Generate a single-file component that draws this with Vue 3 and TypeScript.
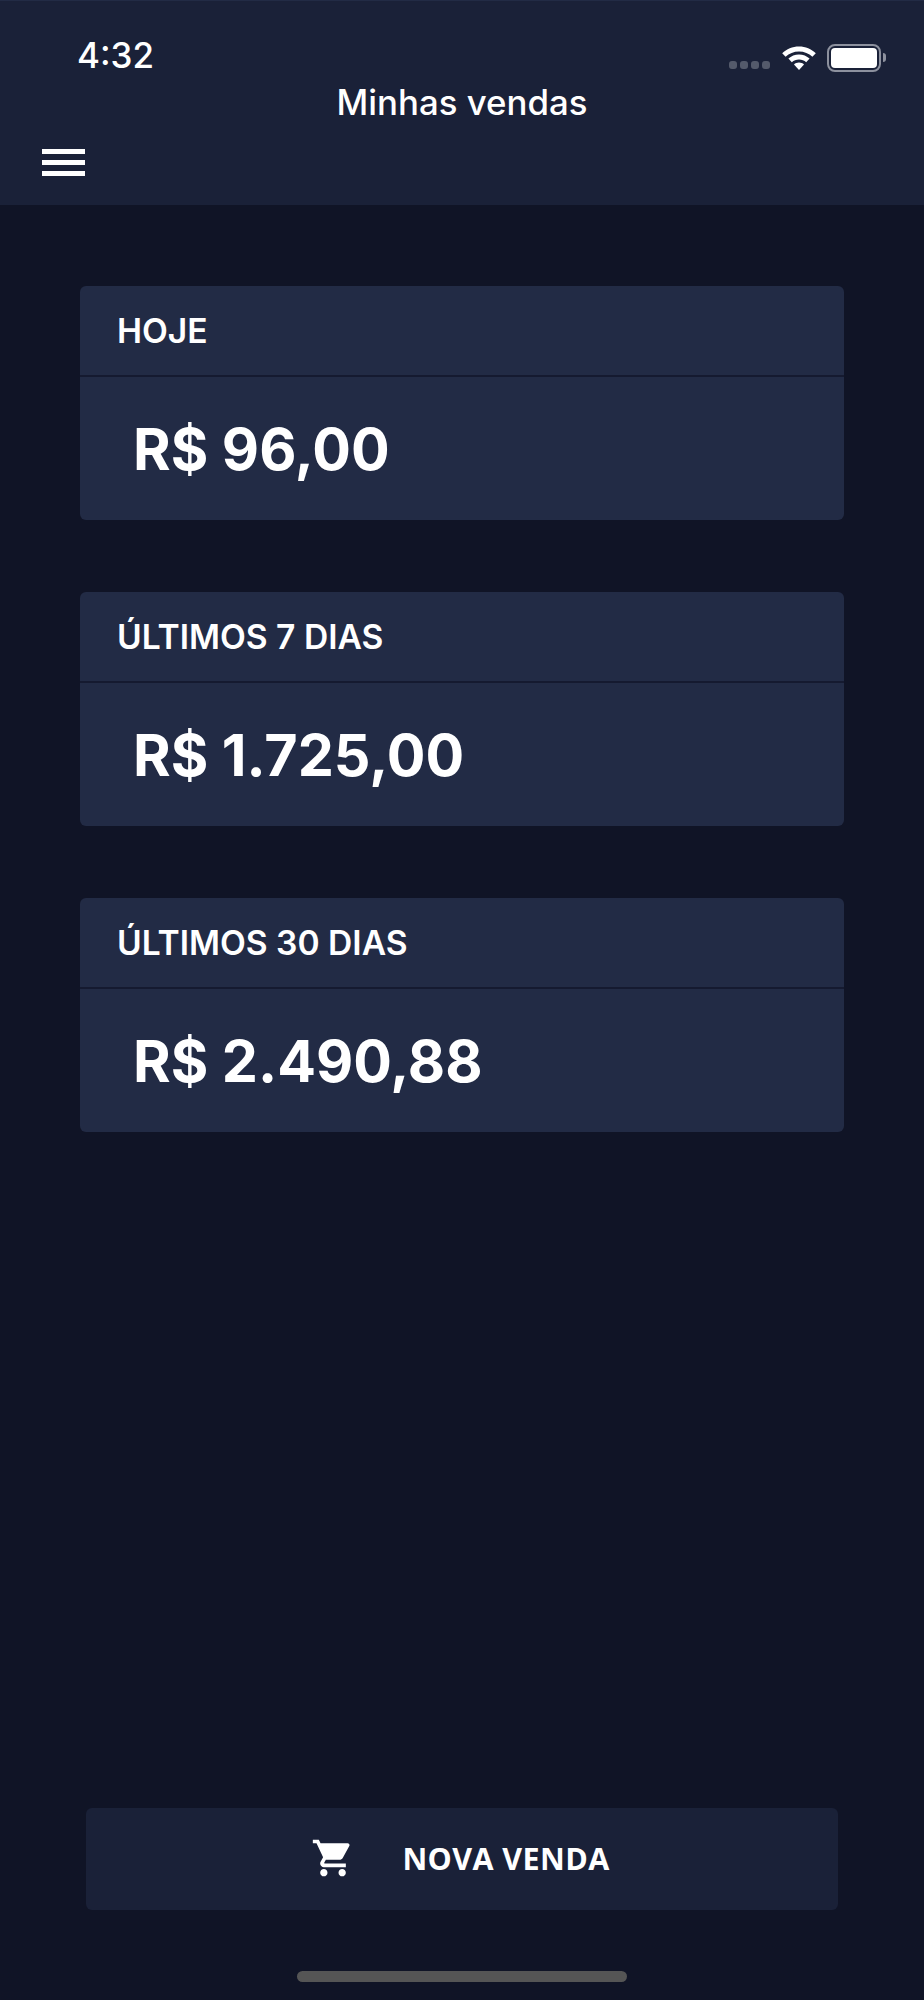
<template>
  <div class="screen">
    <header class="top-bar">
      <div class="status-bar">
        <span class="clock">4:32</span>
        <div class="status-icons">
          <div class="signal">
            <i v-for="n in 4" :key="n"></i>
          </div>
          <svg class="wifi" width="36" height="28" viewBox="0 0 36 28">
            <path d="M18 2.5C11.4 2.5 5.6 5 1.2 9.2L4.6 12.8C8.1 9.5 12.8 7.5 18 7.5s9.9 2 13.4 5.3l3.4-3.6C30.4 5 24.6 2.5 18 2.5z" fill="#fff" />
            <path d="M18 10.5c-4.1 0-7.8 1.6-10.6 4.1l3.4 3.6c1.9-1.7 4.4-2.7 7.2-2.7s5.3 1 7.2 2.7l3.4-3.6C25.8 12.1 22.1 10.5 18 10.5z" fill="#fff" />
            <path d="M18 18.5c-2 0-3.700 .7-5 1.900L18 26l5-5.600c-1.300-1.200-3-1.900-5-1.900z" fill="#fff" />
          </svg>
          <div class="battery">
            <div class="battery-fill"></div>
          </div>
        </div>
      </div>
      <h1 class="page-title">Minhas vendas</h1>
      <button class="menu-btn" type="button" aria-label="Menu">
        <span></span>
        <span></span>
        <span></span>
      </button>
    </header>

    <main class="cards">
      <section v-for="item in summaries" :key="item.label" class="card">
        <div class="card-header">{{ item.label }}</div>
        <div class="card-value">{{ item.value }}</div>
      </section>
    </main>

    <div class="footer">
      <button class="new-sale" type="button">
        <svg class="cart" width="44" height="44" viewBox="0 0 24 24">
          <path d="M7 18c-1.100 0-1.990.9-1.990 2S5.900 22 7 22s2-.9 2-2-.9-2-2-2zM1 2v2h2l3.600 7.590-1.350 2.450c-.16.28-.25.61-.25.960 0 1.100.9 2 2 2h12v-2H7.420c-.14 0-.25-.11-.25-.25l.03-.12.9-1.630h7.450c.75 0 1.410-.41 1.750-1.030l3.580-6.490c.08-.14.120-.31.120-.48 0-.55-.45-1-1-1H5.210l-.94-2H1zm16 16c-1.100 0-1.990.9-1.990 2s.89 2 1.990 2 2-.9 2-2-.9-2-2-2z" fill="#fff" />
        </svg>
        <span>NOVA VENDA</span>
      </button>
      <div class="home-bar"></div>
    </div>
  </div>
</template>

<script setup lang="ts">
const summaries: { label: string; value: string }[] = [
  { label: 'HOJE', value: 'R$ 96,00' },
  { label: 'ÚLTIMOS 7 DIAS', value: 'R$ 1.725,00' },
  { label: 'ÚLTIMOS 30 DIAS', value: 'R$ 2.490,88' },
]
</script>

<style>
html,
body {
  margin: 0;
  background: #101426;
}
</style>

<style scoped>
.screen {
  width: 924px;
  height: 2000px;
  display: flex;
  flex-direction: column;
  background: #101426;
  color: #fff;
  font-family: Inter, 'Liberation Sans', sans-serif;
}
.top-bar {
  height: 205px;
  box-sizing: border-box;
  background: #1a2138;
  border-top: 1px solid #222b45;
  flex-shrink: 0;
}
.status-bar {
  height: 74px;
  display: flex;
  justify-content: space-between;
  align-items: flex-end;
  padding: 0 43px 0 77px;
}
.clock {
  font-size: 35px;
  line-height: 40px;
  font-weight: 500;
}
.status-icons {
  display: flex;
  align-items: center;
  gap: 10px;
  margin-bottom: 3px;
}
.signal {
  display: flex;
  gap: 3px;
  margin-top: 14px;
  margin-right: 1px;
}
.signal i {
  display: block;
  width: 8px;
  height: 8px;
  border-radius: 3px;
  background: #545a6b;
}
.battery {
  position: relative;
  width: 54px;
  height: 28px;
  box-sizing: border-box;
  border: 2px solid #8d919e;
  border-radius: 8px;
  padding: 2px;
}
.battery::after {
  content: '';
  position: absolute;
  right: -7px;
  top: 7px;
  width: 3px;
  height: 9px;
  background: #8d919e;
  border-radius: 0 3px 3px 0;
}
.battery-fill {
  height: 100%;
  background: #fff;
  border-radius: 4px;
}
.page-title {
  margin: 7px 0 0;
  font-size: 34.8px;
  line-height: 40px;
  font-weight: 500;
  text-align: center;
}
.menu-btn {
  display: flex;
  flex-direction: column;
  gap: 6px;
  margin: 27px 0 0 42px;
  padding: 0;
  width: 43px;
  background: none;
  border: 0;
}
.menu-btn span {
  display: block;
  height: 5px;
  background: #fff;
}
.cards {
  display: flex;
  flex-direction: column;
  gap: 72px;
  padding: 81px 80px 0;
}
.card {
  height: 234px;
  background: #222b45;
  border-radius: 6px;
  overflow: hidden;
}
.card-header {
  height: 91px;
  box-sizing: border-box;
  padding: 0 37px 1px;
  display: flex;
  align-items: center;
  border-bottom: 2px solid #151a30;
  font-size: 33.6px;
  font-weight: 600;
}
.card-value {
  padding: 36px 0 0 53px;
  font-size: 57.4px;
  line-height: 72px;
  font-weight: 700;
}
.footer {
  margin-top: auto;
  display: flex;
  flex-direction: column;
  align-items: center;
}
.new-sale {
  width: 752px;
  height: 102px;
  display: flex;
  align-items: center;
  justify-content: center;
  gap: 47px;
  padding: 0 3px 2px 0;
  background: #1a2138;
  border: 0;
  border-radius: 6px;
  color: #fff;
  font-family: 'Open Sans', 'Noto Sans', sans-serif;
  font-size: 30.5px;
  font-weight: 700;
  letter-spacing: 0.4px;
}
.home-bar {
  width: 330px;
  height: 11px;
  margin: 61px 0 18px;
  background: #555;
  border-radius: 6px;
}
</style>
